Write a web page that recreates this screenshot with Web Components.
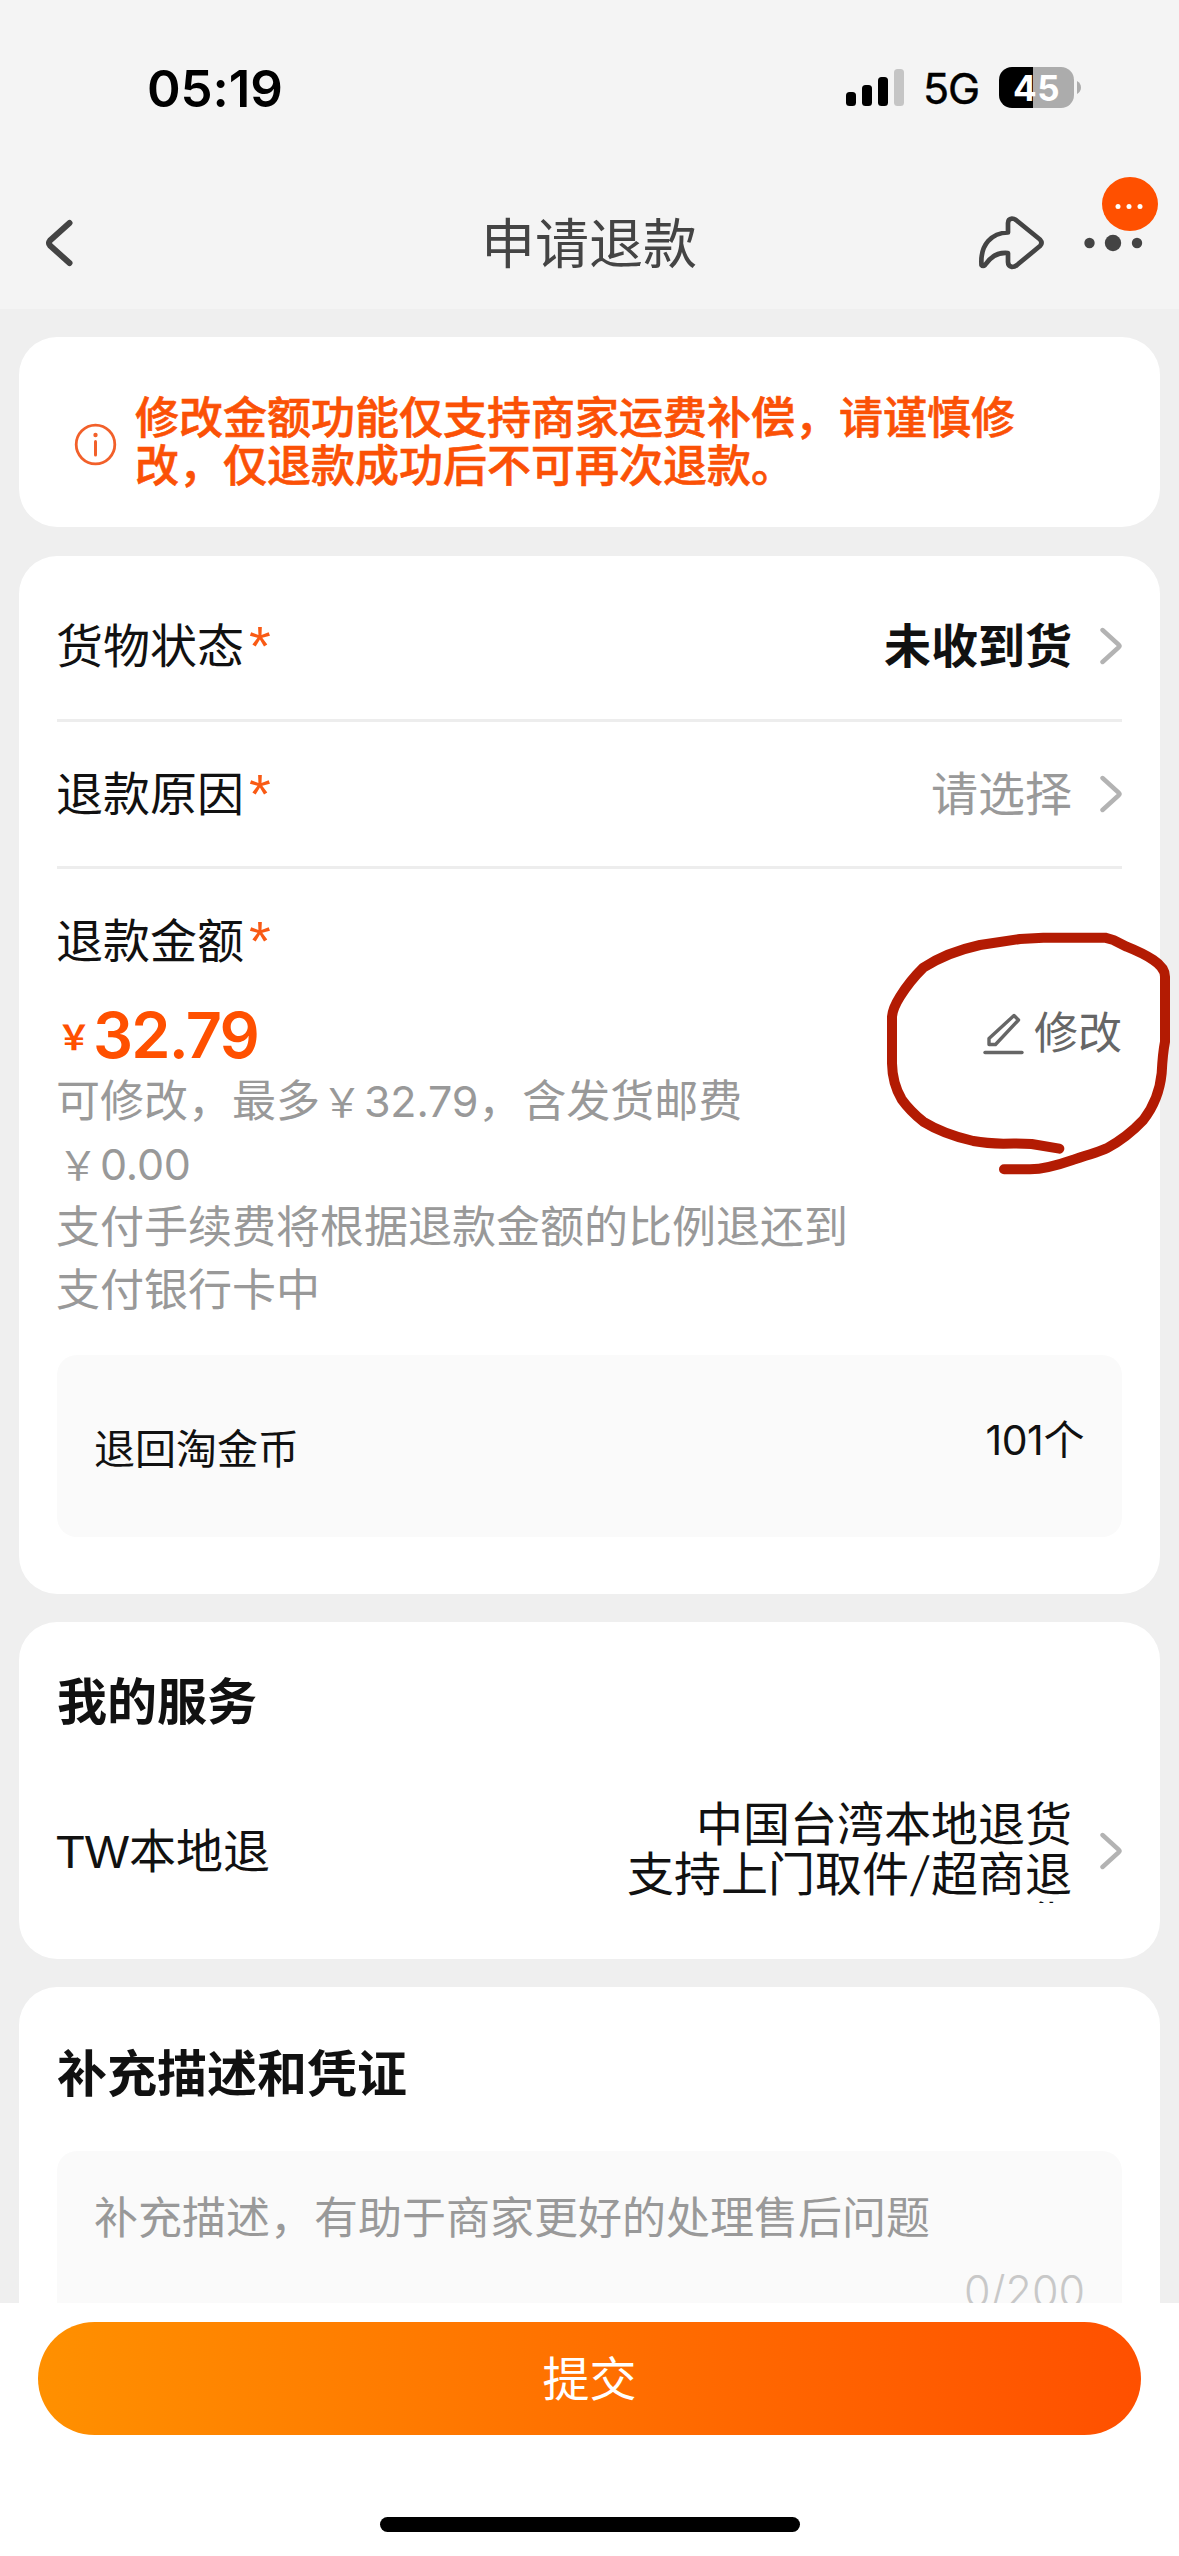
<!DOCTYPE html>
<html lang="zh-CN">
<head>
<meta charset="utf-8">
<meta name="viewport" content="width=device-width">
<title>申请退款</title>
<style>
html,body{margin:0;padding:0}
body{width:1179px;height:2556px;overflow:hidden;background:#efefef;font-family:"Liberation Sans","Noto Sans CJK SC",sans-serif;color:#111}
</style>
</head>
<body>
<refund-page></refund-page>
<script>
const define = (name, html) => customElements.define(name, class extends HTMLElement {
  constructor() {
    super();
    const t = document.createElement('template');
    t.innerHTML = html;
    this.attachShadow({ mode: 'open' }).appendChild(t.content.cloneNode(true));
  }
});

define('status-bar', `
<style>
:host{display:flex;height:176px;box-sizing:border-box;padding:67px 98px 0 147px;justify-content:space-between;align-items:flex-start;color:#000;font-family:Inter,sans-serif}
.time{font-size:51px;font-weight:600;line-height:43px;letter-spacing:-.1px}
.right{display:flex;align-items:center;height:41px}
.net{font-size:43px;line-height:43px;margin-left:19px;width:76px;letter-spacing:-1.2px;white-space:nowrap;-webkit-text-stroke:.5px #000;padding-top:2px}
.bat{width:75px;height:41px;border-radius:13px;background:linear-gradient(90deg,#000 34px,#acacac 34px);color:#fff;font-weight:700;font-size:35px;line-height:42px;text-align:center;letter-spacing:.6px}
svg{display:block}
.tip{margin-left:3px}
</style>
<span class="time">05:19</span>
<div class="right">
<svg width="58" height="41" viewBox="0 0 58 41"><rect x="0" y="25" width="10" height="14" rx="3.5"/><rect x="16" y="18" width="10" height="21" rx="3.5"/><rect x="32" y="10" width="10" height="29" rx="3.5"/><rect x="48" y="2" width="10" height="37" rx="3.5" fill="#c5c5c5"/></svg>
<span class="net">5G</span><div class="bat">45</div>
<svg class="tip" width="4" height="13" viewBox="0 0 4 13"><path d="M0 0C5.3 2.5 5.3 10.5 0 13Z" fill="#acacac"/></svg>
</div>`);

define('nav-bar', `
<style>
:host{display:flex;height:133px;box-sizing:border-box;padding:0 36px 0 43px;align-items:center;justify-content:space-between;color:#444}
.side{display:flex;width:198px;align-items:center}
.end{justify-content:flex-end;width:206px;gap:38px}
.title{font-size:54px;line-height:60px;padding-top:5px}
.more{position:relative;display:flex}
.badge{position:absolute;left:16px;top:-58px}
svg{display:block}
</style>
<div class="side"><svg width="32" height="52" viewBox="0 0 32 52" fill="none" stroke="#444" stroke-width="6" stroke-linecap="round" stroke-linejoin="round"><path d="M26.500 6 7 23.500Q5 26 7 28.500L26.500 46"/></svg></div>
<span class="title"><slot></slot></span>
<div class="side end">
<svg width="67" height="54" viewBox="1 0 67 54" fill="none" stroke="#444" stroke-width="4.700" stroke-linejoin="round"><path d="M30 16.500V7Q30 3 34 2.500Q36 2.500 38 4L62 23.500Q65 27 62 30L39 49Q37 51 34 51Q30 50 30 46V37C20 36 13 40 7 49Q5 51 3.500 49C2 28 14 17 30 16.500Z"/></svg>
<div class="more"><svg width="59" height="20" viewBox="0 0 59 20" fill="#444"><circle cx="5.500" cy="10" r="5.200"/><circle cx="29" cy="10" r="8.200"/><circle cx="53" cy="10" r="5.200"/></svg>
<svg class="badge" width="60" height="56" viewBox="0 0 60 56"><ellipse cx="30" cy="29" rx="28" ry="27" fill="#ff5000"/><g fill="#fff"><circle cx="18" cy="31.500" r="2.500"/><circle cx="29" cy="31.500" r="2.500"/><circle cx="40" cy="31.500" r="2.500"/></g></svg></div>
</div>`);

define('page-card', `
<style>:host{display:block;box-sizing:border-box;background:#fff;border-radius:38px;margin:0 19px;padding:0 38px}</style><slot></slot>`);

define('notice-bar', `
<style>
:host{display:flex;height:190px;align-items:center;gap:18px;color:#fb5106;padding:0 17px}
svg{display:block;flex:none;margin-top:25px}
p{margin:0;font-size:44px;line-height:48px;font-weight:500;-webkit-text-stroke:.6px #fb5106;padding-top:22px;width:884px}
</style>
<svg width="43" height="43" viewBox="0 0 43 43" fill="none" stroke="#f2602a"><circle cx="21.500" cy="21.500" r="19.300" stroke-width="2.800"/><path d="M21.500 18.500V32" stroke-width="3" stroke-linecap="round"/><circle cx="21.500" cy="12" r="2.200" fill="#f2602a" stroke="none"/></svg>
<p><slot></slot></p>`);

define('chevron-right', `
<style>:host{display:block;width:22px;height:38px}svg{display:block}</style>
<svg width="22" height="38" viewBox="1 0 22 38" fill="none" stroke="#b3b3b3" stroke-width="4.400" stroke-linecap="round" stroke-linejoin="round"><path d="M3.500 3 20 18Q21 19 20 20L3.500 35"/></svg>`);

define('form-row', `
<style>
:host{display:flex;align-items:center;justify-content:space-between;height:var(--h,144px);font-size:47px;line-height:50px}
.label{display:flex;align-items:center;padding-top:2px;margin-left:-1px}
.value{display:flex;align-items:center;gap:28px}
.star{color:#f95a14;font-size:56px;line-height:50px;height:50px;margin:-20px 0 0 5px;padding-top:9px;box-sizing:border-box}
:host(:not([required])) .star{display:none}
:host([plain]) .value{display:none}
.text{padding-top:2px}
::slotted([slot=value]){display:block}
</style>
<div class="label"><slot></slot><span class="star">*</span></div>
<div class="value"><div class="text"><slot name="value"></slot></div><chevron-right></chevron-right></div>`);

define('row-divider', `<style>:host{display:block;height:3px;background:#ededed}</style>`);

define('refund-amount', `
<style>
:host{display:block}
.line{display:flex;justify-content:space-between;align-items:center;height:69px}
.price{display:flex;align-items:baseline;color:#ff5000;line-height:69px;white-space:nowrap;padding-top:2px}
.yen{font-size:34px;font-weight:700;font-family:"Noto Sans CJK SC";line-height:40px;transform:translateY(-8px)}
.num{font-family:Inter;font-size:63px;font-weight:600;margin-left:2px;letter-spacing:-1.800px}
.edit{display:flex;align-items:center;color:#666;font-size:44px;line-height:50px;gap:9px;margin:-2px 0 0 0}
.edit svg{display:block}
.desc{font-size:44px;line-height:63px;color:#999;padding-top:1px;margin:0 0 -1px -1px}
.desc div{white-space:nowrap}
.n{font-family:Inter;font-size:43px;line-height:1;letter-spacing:-.2px}
.y{font-size:40px;display:inline-block;width:44px;text-align:center;line-height:1}
</style>
<div class="line"><div class="price"><span class="yen">￥</span><span class="num">32.79</span></div>
<div class="edit"><svg width="42" height="44" viewBox="0 0 42 44" fill="none" stroke="#666" stroke-width="3.400" stroke-linejoin="round" stroke-linecap="round"><path d="M31 3.500 35.500 8 12.500 32.500H6V26.500Z"/><path d="M2 40.500H39"/></svg><span>修改</span></div></div>
<div class="desc"><div>可修改，最多<span class="y">￥</span><span class="n">32.79</span>，含发货邮费</div><div><span class="y">￥</span><span class="n">0.00</span></div><div>支付手续费将根据退款金额的比例退还到</div><div>支付银行卡中</div></div>`);

define('coin-box', `
<style>
:host{display:flex;justify-content:space-between;margin-top:34px;height:182px;box-sizing:border-box;padding:0 38px 0 37px;border-radius:20px;background:#fafafa;font-size:41px;line-height:182px}
.l{padding-top:4px}.r{margin-top:-6px}
::slotted([slot=count]){font-family:Inter,"Noto Sans CJK SC",sans-serif;letter-spacing:-.4px}
</style><span class="l"><slot></slot></span><span class="r"><slot name="count"></slot></span>`);

define('section-title', `<style>:host{display:block;font-size:50px;line-height:60px;font-weight:700;padding-top:1px;margin:0 0 -1px}</style><slot></slot>`);

define('service-text', `
<style>:host{display:block;width:460px;height:103px;overflow:hidden;text-align:right;font-size:47px;line-height:50px}div{white-space:nowrap;height:50px}i{font:300 47px/40px Inter,sans-serif;display:inline-block;height:40px;width:22px;text-align:center;transform:skewX(-8deg)}</style>
<div>中国台湾本地退货</div><div>支持上门取件<i>/</i>超商退</div><div>货</div>`);

define('desc-input', `
<style>
:host{display:flex;flex-direction:column;height:400px;box-sizing:border-box;padding:38px 37px 0;border-radius:20px;background:#fafafa;font-size:44px;line-height:60px;color:#999}
.count{align-self:flex-end;color:#c8c8c8;margin-top:12px;font:300 43px/60px Inter,sans-serif}
</style><span><slot></slot></span><span class="count"><slot name="count"></slot></span>`);

define('submit-bar', `
<style>
:host{display:flex;flex-direction:column;align-items:center;height:253px;background:#fff;position:relative}
button{all:unset;box-sizing:border-box;margin-top:19px;width:1103px;height:113px;border-radius:57px;background:linear-gradient(90deg,#ff9000,#ff5000);color:#fff;text-align:center;font-size:47px;line-height:115px}
.home{width:420px;height:15px;border-radius:8px;background:#000;margin-top:82px}
</style><button><slot></slot></button><div class="home"></div>`);

define('hand-mark', `
<style>:host{display:block;position:absolute;left:860px;top:900px;width:319px;height:300px;pointer-events:none}svg{display:block}</style>
<svg width="319" height="300" viewBox="0 0 957 900" fill="none" stroke="#b31b03" stroke-width="30" stroke-linecap="round" stroke-linejoin="round"><path d="M598 746L515 732Q480 730 430 731Q380 730 340 723Q250 702 190 665Q150 633 125 598Q97 550 96 490V350Q98 325 120 290Q150 242 190 203Q260 157 360 135L480 117L550 113H735L760 120L800 140Q850 160 880 180Q915 203 915 230V425Q908 460 905 520Q897 600 850 660Q800 713 740 745Q720 755 640 779Q560 807 510 808H432"/></svg>`);

define('refund-page', `
<style>
:host{display:flex;flex-direction:column;width:1179px;height:2556px;position:relative;overflow:hidden}
header{height:309px;background:#f4f4f4;flex:none}
main{display:flex;flex-direction:column;gap:28px;padding-top:28px;height:1994px;box-sizing:border-box;overflow:hidden}
page-card{flex:none}
.form{height:1038px;padding-top:17px;margin-top:1px}
.form .first{--h:146px}
.amount{--h:144px;margin-bottom:-13px}
.service{height:337px;padding-top:50px}
.extra{height:500px;padding-top:57px}
.local{--h:103px;margin-top:67px}
.strong{font-weight:700}.ph{color:#999}
desc-input{margin-top:47px}
</style>
<header><status-bar></status-bar><nav-bar>申请退款</nav-bar></header>
<main>
<page-card><notice-bar>修改金额功能仅支持商家运费补偿，请谨慎修改，仅退款成功后不可再次退款。</notice-bar></page-card>
<page-card class="form">
<form-row class="first" required>货物状态<span slot="value" class="strong">未收到货</span></form-row>
<row-divider></row-divider>
<form-row required>退款原因<span slot="value" class="ph">请选择</span></form-row>
<row-divider></row-divider>
<form-row class="amount" required plain>退款金额</form-row>
<refund-amount></refund-amount>
<coin-box>退回淘金币<span slot="count">101个</span></coin-box>
</page-card>
<page-card class="service"><section-title>我的服务</section-title>
<form-row class="local">TW本地退<service-text slot="value"></service-text></form-row></page-card>
<page-card class="extra"><section-title>补充描述和凭证</section-title>
<desc-input>补充描述，有助于商家更好的处理售后问题<span slot="count">0/200</span></desc-input></page-card>
</main>
<submit-bar>提交</submit-bar>
<hand-mark></hand-mark>`);
</script>
</body>
</html>
